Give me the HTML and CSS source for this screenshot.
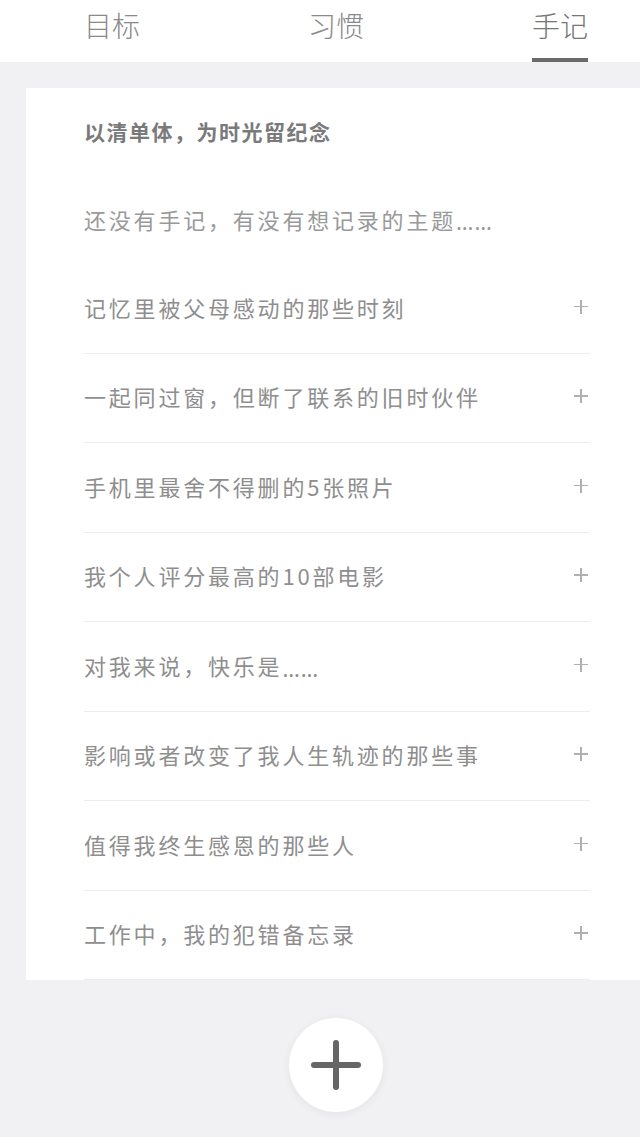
FILE: index.html
```html
<!DOCTYPE html>
<html lang="zh">
<head>
<meta charset="utf-8">
<link rel="stylesheet" href="styles.css">
</head>
<body>
<div class="page">
  <header class="tabs">
    <div class="tab">目标</div>
    <div class="tab">习惯</div>
    <div class="tab active">手记</div>
  </header>
  <main class="content">
    <section class="card">
      <h1 class="title">以清单体，为时光留纪念</h1>
      <p class="intro">还没有手记，有没有想记录的主题<span class="ell">……</span></p>
      <ul class="list">
        <li class="row"><span>记忆里被父母感动的那些时刻</span><i class="plus"></i></li>
        <li class="row"><span>一起同过窗，但断了联系的旧时伙伴</span><i class="plus"></i></li>
        <li class="row"><span>手机里最舍不得删的5张照片</span><i class="plus"></i></li>
        <li class="row"><span>我个人评分最高的10部电影</span><i class="plus"></i></li>
        <li class="row"><span>对我来说，快乐是<span class="ell">……</span></span><i class="plus"></i></li>
        <li class="row"><span>影响或者改变了我人生轨迹的那些事</span><i class="plus"></i></li>
        <li class="row"><span>值得我终生感恩的那些人</span><i class="plus"></i></li>
        <li class="row"><span>工作中，我的犯错备忘录</span><i class="plus"></i></li>
      </ul>
    </section>
    <div class="fab-wrap">
      <button class="fab" aria-label="添加">
        <svg viewBox="0 0 50 50" width="50" height="50"><path d="M25 3v44M3 25h44" stroke="#666" stroke-width="6" stroke-linecap="round" fill="none"/></svg>
      </button>
    </div>
  </main>
</div>
</body>
</html>
```
FILE: styles.css
```css
html, body {
  margin: 0;
  padding: 0;
  overflow: hidden;
  background: #f1f1f3;
}
body {
  font-family: "Noto Sans CJK SC", "Noto Sans", sans-serif;
  width: 640px;
  height: 1137px;
}
.page {
  width: 672px;
}
.tabs {
  display: grid;
  grid-template-columns: repeat(3, 224px);
  height: 62px;
  background: #fff;
}
.tab {
  display: flex;
  justify-content: center;
  align-items: flex-start;
  font-size: 28px;
  line-height: 1;
  padding-top: 11px;
  color: #8a8a8a;
  font-weight: 300;
  position: relative;
}
.tab.active {
  color: #777;
}
.tab.active::after {
  content: "";
  position: absolute;
  left: 84px;
  right: 84px;
  bottom: 0;
  height: 4px;
  background: #6b6b6b;
}
.content {
  padding: 26px 26px 0 26px;
}
.card {
  background: #fff;
  padding: 0 56px 0 58px;
}
.title {
  margin: 0;
  height: 86px;
  padding-bottom: 2px;
  display: flex;
  align-items: center;
  font-size: 21px;
  letter-spacing: 1.5px;
  font-weight: 700;
  color: #7a7a7a;
}
.intro {
  margin: 0;
  height: 85px;
  padding-bottom: 3px;
  display: flex;
  align-items: center;
  font-size: 22px;
  letter-spacing: 2.8px;
  color: #999;
  font-weight: 400;
}
.ell {
  font-family: "Noto Sans", sans-serif;
  letter-spacing: 1px;
  position: relative;
  top: 2px;
}
.list {
  list-style: none;
  margin: 0;
  padding: 0;
}
.row {
  height: 85.5px;
  padding-bottom: 3px;
  display: flex;
  align-items: center;
  justify-content: space-between;
  border-bottom: 1px solid #ededed;
  font-size: 22px;
  letter-spacing: 2.8px;
  color: #8e8e8e;
}
.plus {
  position: relative;
  width: 14px;
  height: 14px;
  margin-right: 2px;
}
.plus::before, .plus::after {
  content: "";
  position: absolute;
  background: #b0b0b0;
}
.plus::before {
  left: 0; right: 0; top: 6px; height: 1.5px;
}
.plus::after {
  top: 0; bottom: 0; left: 6px; width: 1.5px;
}
.fab-wrap {
  display: flex;
  justify-content: center;
  padding-top: 38px;
}
.fab {
  width: 94px;
  height: 94px;
  border-radius: 50%;
  border: none;
  background: #fff;
  box-shadow: 0 2px 10px rgba(0,0,0,0.06);
  display: flex;
  align-items: center;
  justify-content: center;
  padding: 0;
}
```
